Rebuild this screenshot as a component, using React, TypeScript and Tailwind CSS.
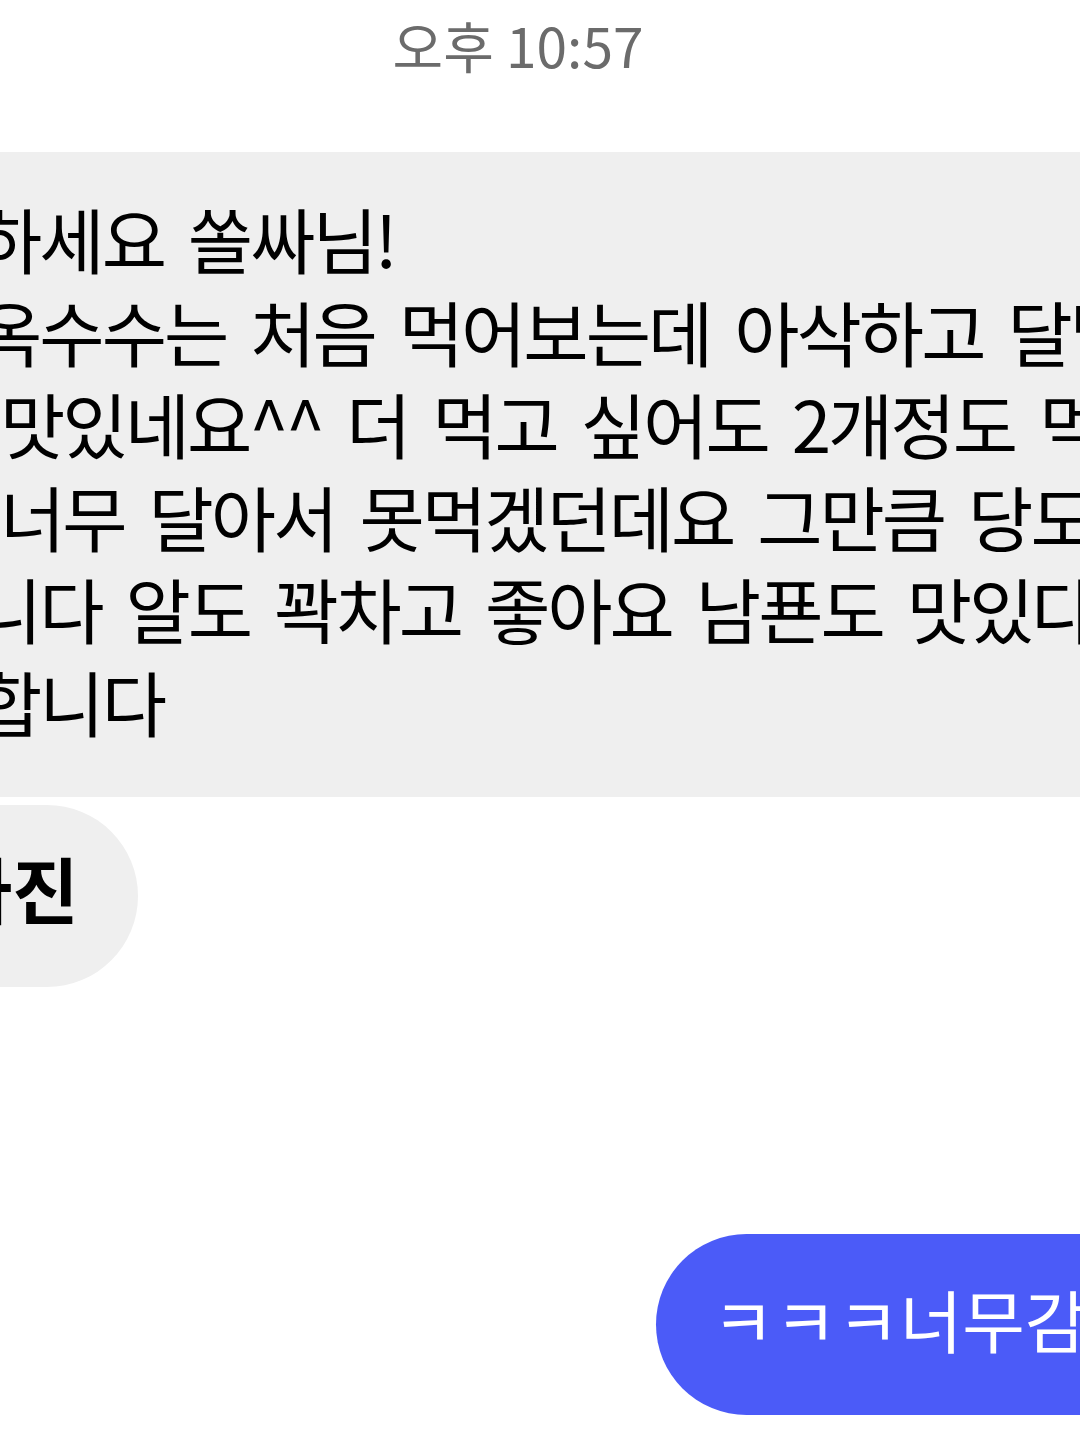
import React from "react";

const kr = { fontFamily: '"Noto Sans CJK KR", "Noto Sans", sans-serif' };

const lines: { text: string; ml: string }[] = [
  { text: "하세요 쏠싸님!", ml: "ml-[-23px]" },
  { text: "옥수수는 처음 먹어보는데 아삭하고 달달하고", ml: "ml-[-23px]" },
  { text: "맛있네요^^ 더 먹고 싶어도 2개정도 먹으면", ml: "ml-[0px]" },
  { text: "너무 달아서 못먹겠던데요 그만큼 당도가 높습", ml: "ml-[0px]" },
  { text: "니다 알도 꽉차고 좋아요 남푠도 맛있다고", ml: "ml-[-23px]" },
  { text: "합니다", ml: "ml-[-23px]" },
];

export default function App() {
  return (
    <div className="w-[1080px] h-[1435px] bg-white overflow-hidden flex flex-col" style={kr}>
      <div className="flex justify-center pr-[44px] pt-[8px] h-[152px]">
        <span className="text-[55px] leading-[72px] text-[#6b6b6b]">오후 10:57</span>
      </div>
      <div className="bg-[#efefef] pt-[39px] pb-[51px] overflow-hidden">
        <div className="text-[71px] leading-[92.5px] tracking-[-3px] [word-spacing:11px] text-black whitespace-nowrap">
          {lines.map((l, i) => (
            <div key={i} className={l.ml}>
              {l.text}
            </div>
          ))}
        </div>
      </div>
      <div className="flex mt-[8px]">
        <div className="ml-[-114px] h-[182px] rounded-full bg-[#efefef] flex items-center pl-[60px] pr-[60px] pb-[18px]">
          <span className="text-[72px] font-bold text-black whitespace-nowrap">사진</span>
        </div>
      </div>
      <div className="flex mt-[247px] pl-[656px]">
        <div className="shrink-0 h-[181px] rounded-full bg-[#4b5bf8] flex items-center pl-[56px] pr-[80px] pb-[12px]">
          <span className="text-[68px] text-white whitespace-nowrap">ㅋㅋㅋ너무감사합니다</span>
        </div>
      </div>
    </div>
  );
}
